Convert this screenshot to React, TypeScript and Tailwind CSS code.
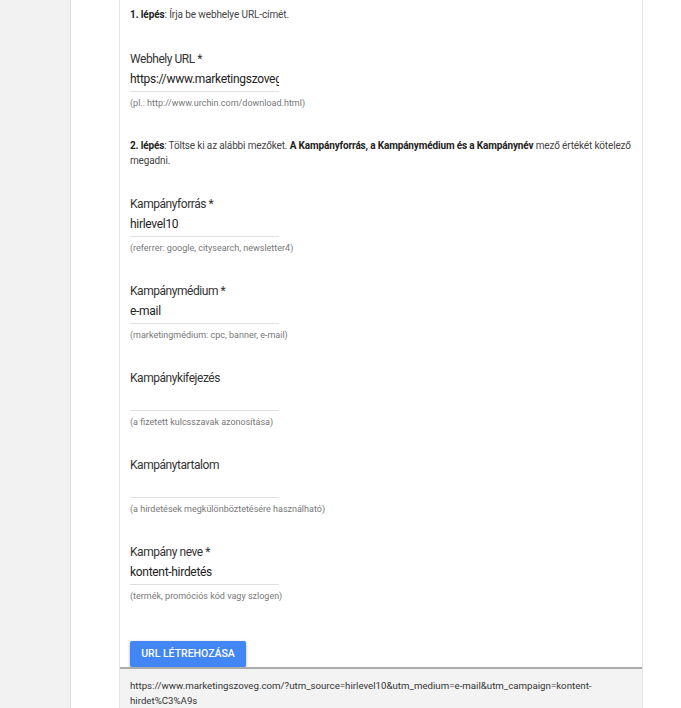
import React from "react";

const fields = [
  { label: "Kampányforrás *", value: "hirlevel10", hint: "(referrer: google, citysearch, newsletter4)" },
  { label: "Kampánymédium *", value: "e-mail", hint: "(marketingmédium: cpc, banner, e-mail)" },
  { label: "Kampánykifejezés", value: "", hint: "(a fizetett kulcsszavak azonosítása)" },
  { label: "Kampánytartalom", value: "", hint: "(a hirdetések megkülönböztetésére használható)" },
  { label: "Kampány neve *", value: "kontent-hirdetés", hint: "(termék, promóciós kód vagy szlogen)" },
];

function Field({ label, value, hint, className = "" }: { label: string; value: string; hint: string; className?: string }) {
  return (
    <div className={className}>
      <div className="text-[12px] leading-[18px] tracking-[-0.45px] text-[#333]">{label}</div>
      <div className="mt-[2px] w-[149px] overflow-hidden whitespace-nowrap border-b border-[#e0e0e0] pb-[3px] text-[12px] leading-[18px] tracking-[-0.3px] text-[#222]">
        {value || "\u00a0"}
      </div>
      <div className="mt-[4px] text-[9px] leading-[14px] text-[#777]">{hint}</div>
    </div>
  );
}

export default function App() {
  return (
    <div
      className="flex h-[708px] w-[681px] overflow-hidden bg-white"
      style={{ fontFamily: "Roboto, 'Liberation Sans', sans-serif" }}
    >
      {/* left gutter */}
      <div className="h-full w-[71px] shrink-0 border-r border-[#e0e0e0] bg-[#f2f2f2]" />
      <div className="h-full w-[48px] shrink-0" />

      {/* card */}
      <div className="flex h-full w-[524px] shrink-0 flex-col border-x border-[#e4e4e4]">
        <div className="flex-1 pl-[10px] pr-[2px] pt-[7px]">
          <p className="text-[10px] leading-[15px] tracking-[-0.1px] text-[#444]">
            <b className="font-bold text-[#222]">1. lépés</b>: Írja be webhelye URL-címét.
          </p>

          <Field
            className="mt-[28px]"
            label="Webhely URL *"
            value="https://www.marketingszoveg.com/"
            hint="(pl.: http://www.urchin.com/download.html)"
          />

          <p className="mt-[28px] text-[10px] leading-[15px] tracking-[-0.15px] text-[#444]">
            <b className="font-bold text-[#222]">2. lépés</b>: Töltse ki az alábbi mezőket.{" "}
            <b className="font-bold text-[#222]">A Kampányforrás, a Kampánymédium és a Kampánynév</b> mező értékét kötelező
            megadni.
          </p>

          {fields.map((f) => (
            <Field key={f.label} className="mt-[27px]" label={f.label} value={f.value} hint={f.hint} />
          ))}

          <button className="mt-[38px] h-[26px] w-[116px] rounded-[2px] bg-[#4285f4] text-[10.5px] font-medium text-white shadow-[0_1px_3px_rgba(0,0,0,0.35)]">
            URL LÉTREHOZÁSA
          </button>
        </div>

        {/* result */}
        <div className="h-[42px] shrink-0 border-t-2 border-[#ababab] bg-[#f3f3f3] pl-[10px] pr-[40px] pt-[9px] text-[9.7px] leading-[15px] text-[#333]">
          https://www.marketingszoveg.com/?utm_source=hirlevel10&amp;utm_medium=e-mail&amp;utm_campaign=kontent-hirdet%C3%A9s
        </div>
      </div>

      <div className="h-full flex-1" />
    </div>
  );
}
